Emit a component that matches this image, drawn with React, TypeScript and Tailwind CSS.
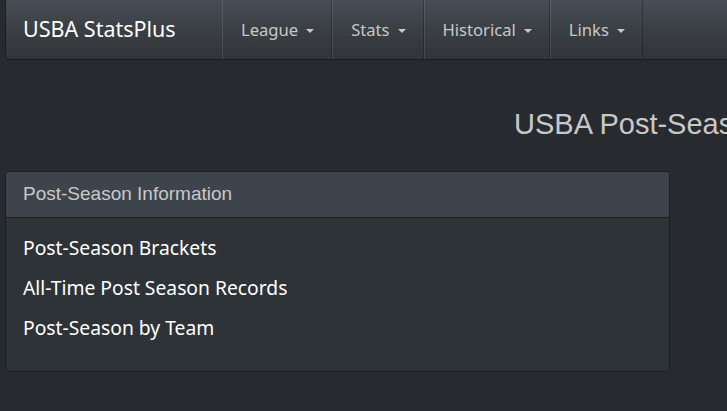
import React from "react";

const NavItem = ({ label }: { label: string }) => (
  <div className="flex items-center h-full pt-[2px] pl-[18px] pr-[17px] border-l border-l-[rgba(255,255,255,0.1)] border-r border-r-[rgba(0,0,0,0.25)] text-[16.6px] text-[#c8c8c8]">
    <span>{label}</span>
    <span className="ml-[8px] inline-block w-0 h-0 border-l-[4px] border-r-[4px] border-t-[4px] border-l-transparent border-r-transparent border-t-[#c8c8c8]" />
  </div>
);

export default function App() {
  return (
    <div className="w-[727px] h-[411px] overflow-hidden bg-[#272b30]" style={{ fontFamily: '"Noto Sans", sans-serif' }}>
      <div className="ml-[5px] w-[760px] h-[60px] flex bg-gradient-to-b from-[#484e55] via-[#3a3f44] to-[#313539] border-b border-l border-[#1c1e22] rounded-bl-[4px]">
        <div className="w-[216px] flex items-center pl-[17px] text-[21.5px] text-white">USBA StatsPlus</div>
        <div className="flex h-full">
          <NavItem label="League" />
          <NavItem label="Stats" />
          <NavItem label="Historical" />
          <NavItem label="Links" />
        </div>
      </div>
      <div className="h-[111px] pl-[514px] pt-[43px] whitespace-nowrap text-[29px] text-[#c8c8c8]" style={{ fontFamily: '"Liberation Sans", Arial, sans-serif' }}>
        USBA Post-Season Information
      </div>
      <div className="ml-[5px] w-[665px] h-[201px] rounded-[4px] border border-[#1c1e22] bg-[#2e3338] overflow-hidden">
        <div className="h-[46px] bg-[#3e444c] border-b border-[#1c1e22] flex items-center pl-[17px] text-[19px] text-[#c8c8c8]" style={{ fontFamily: '"Liberation Sans", Arial, sans-serif' }}>
          Post-Season Information
        </div>
        <div className="pt-[15px] pl-[17px] flex flex-col text-[19.3px] text-white">
          <div className="h-[40px] leading-[30px]">Post-Season Brackets</div>
          <div className="h-[40px] leading-[30px]">All-Time Post Season Records</div>
          <div className="h-[40px] leading-[30px]">Post-Season by Team</div>
        </div>
      </div>
    </div>
  );
}
